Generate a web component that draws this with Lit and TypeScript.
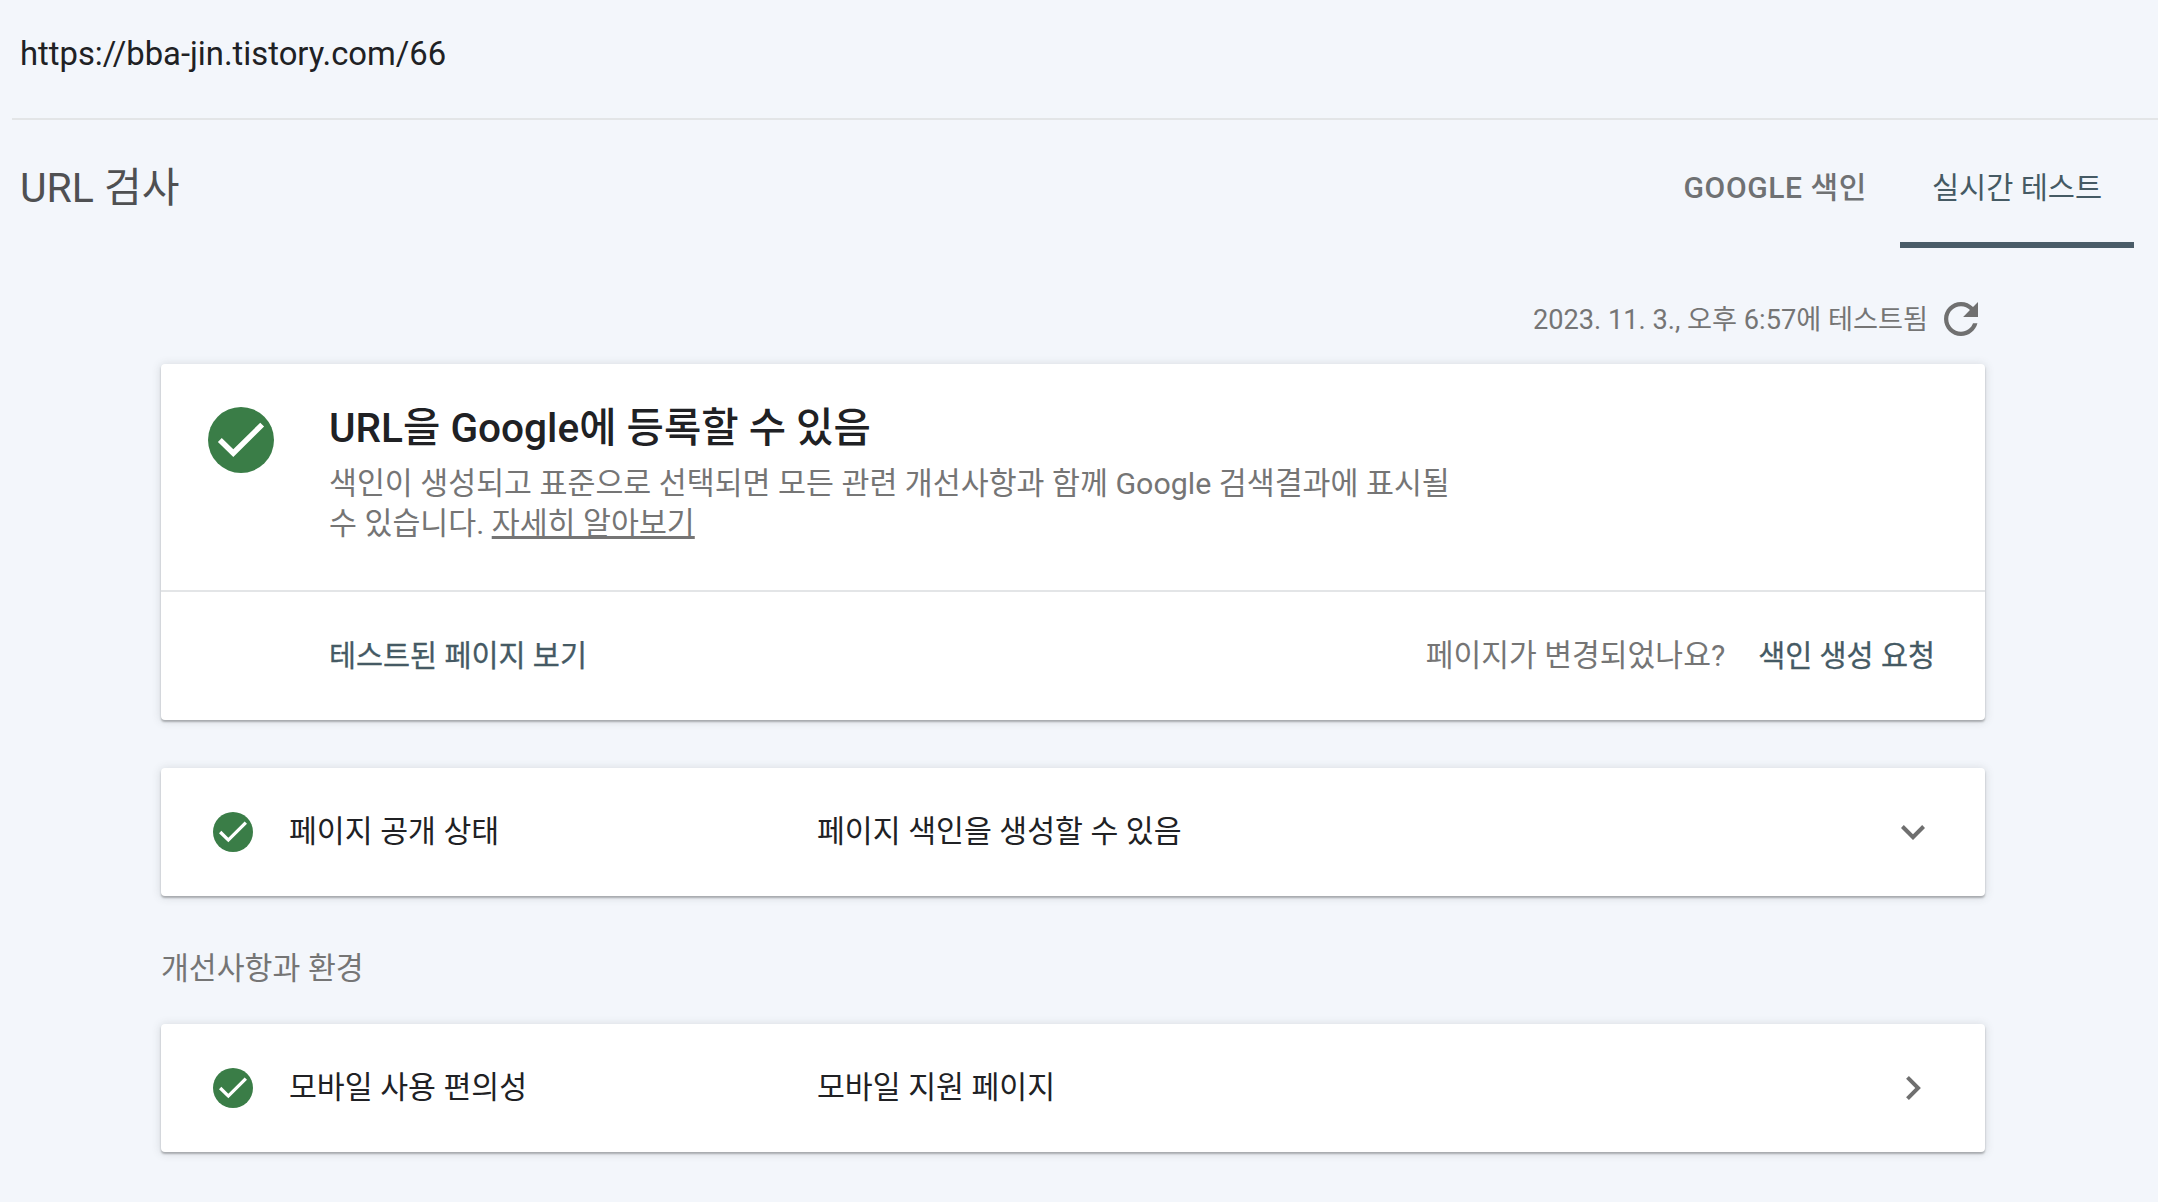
import { LitElement, html, css, svg } from 'lit';
import { customElement } from 'lit/decorators.js';

const checkIcon = svg`
  <circle cx="12" cy="12" r="12" fill="#3a7d47"></circle>
  <path fill="#fff" d="M9.2 15.4 5 11.3l-1.4 1.4 5.6 5.5L20.4 7.1 19 5.7z"></path>
`;

interface ResultRow {
  label: string;
  value: string;
  chevron: 'down' | 'right';
}

const coverage: ResultRow = { label: '페이지 공개 상태', value: '페이지 색인을 생성할 수 있음', chevron: 'down' };
const mobile: ResultRow = { label: '모바일 사용 편의성', value: '모바일 지원 페이지', chevron: 'right' };

@customElement('app-root')
export class AppRoot extends LitElement {
  renderRow(row: ResultRow) {
    return html`
      <section class="card row">
        <svg class="row-check" viewBox="0 0 24 24">${checkIcon}</svg>
        <span class="row-label">${row.label}</span>
        <span class="row-value">${row.value}</span>
        <span class="chevron">
          ${row.chevron === 'down'
            ? html`<svg class="chev-down" viewBox="6 8.59 12 7.41"><path d="M16.59 8.59 12 13.17 7.41 8.59 6 10l6 6 6-6z"></path></svg>`
            : html`<svg class="chev-right" viewBox="8.59 6 7.41 12"><path d="M10 6 8.59 7.41 13.17 12l-4.58 4.59L10 18l6-6z"></path></svg>`}
        </span>
      </section>
    `;
  }

  render() {
    return html`
      <div class="url-bar"><span class="url">https://bba-jin.tistory.com/66</span></div>
      <header class="title-row">
        <h1 class="title">URL 검사</h1>
        <nav class="tabs">
          <span class="tab">GOOGLE 색인</span>
          <span class="tab active">실시간 테스트</span>
        </nav>
      </header>
      <div class="tested">
        <span>2023. 11. 3., 오후 6:57에 테스트됨</span>
        <svg class="refresh" viewBox="4 4 16 16">
          <path d="M17.65 6.35C16.2 4.9 14.21 4 12 4c-4.42 0-7.99 3.58-7.99 8s3.57 8 7.99 8c3.73 0 6.84-2.55 7.73-6h-2.08c-.82 2.33-3.04 4-5.65 4-3.31 0-6-2.69-6-6s2.69-6 6-6c1.66 0 3.14.69 4.22 1.78L13 11h7V4l-2.35 2.35z"></path>
        </svg>
      </div>
      <main class="content">
        <section class="card verdict">
          <div class="verdict-top">
            <svg class="verdict-check" viewBox="0 0 24 24">${checkIcon}</svg>
            <div class="verdict-text">
              <h2 class="verdict-title">URL을 Google에 등록할 수 있음</h2>
              <p class="verdict-desc">
                색인이 생성되고 표준으로 선택되면 모든 관련 개선사항과 함께 Google 검색결과에 표시될
                수 있습니다. <a class="learn-more">자세히 알아보기</a>
              </p>
            </div>
          </div>
          <div class="verdict-actions">
            <span class="action">테스트된 페이지 보기</span>
            <span class="changed">페이지가 변경되었나요?</span>
            <span class="action">색인 생성 요청</span>
          </div>
        </section>
        ${this.renderRow(coverage)}
        <h3 class="section-title">개선사항과 환경</h3>
        ${this.renderRow(mobile)}
      </main>
    `;
  }

  static styles = css`
    :host {
      display: block;
      height: 1202px;
      overflow: hidden;
      background: #f3f6fb;
      font-family: Roboto, 'Noto Sans CJK KR', sans-serif;
      color: #202124;
    }

    .url-bar {
      height: 118px;
      margin-left: 12px;
      padding-left: 8px;
      display: flex;
      align-items: center;
      border-bottom: 2px solid #e3e5e7;
    }

    .url {
      font-size: 32.8px;
      padding-bottom: 10px;
    }

    .title-row {
      height: 128px;
      display: flex;
      justify-content: space-between;
      padding: 0 24px 0 20px;
    }

    .title {
      margin: 0;
      padding-top: 42px;
      font-size: 41px;
      line-height: 52px;
      font-weight: 400;
      color: #4f5052;
    }

    .tabs {
      display: flex;
    }

    .tab {
      box-sizing: border-box;
      height: 128px;
      padding-top: 48px;
      line-height: 40px;
      font-size: 30px;
      letter-spacing: 0.6px;
      font-weight: 500;
      color: #6f7173;
      margin-right: 33px;
    }

    .tab.active {
      width: 234px;
      margin: 0;
      text-align: center;
      font-size: 29.5px;
      letter-spacing: 0;
      font-weight: 400;
      color: #455a64;
      border-bottom: 6px solid #4a5c68;
    }

    .tested {
      height: 116px;
      display: flex;
      justify-content: flex-end;
      align-items: center;
      gap: 16px;
      padding: 22px 180px 0 0;
      box-sizing: border-box;
      font-size: 27.2px;
      color: #757575;
    }

    .refresh {
      width: 34px;
      height: 34px;
      margin-top: 3px;
      fill: #707070;
    }

    .content {
      margin: 0 173px 0 161px;
    }

    .card {
      background: #fff;
      border-radius: 4px;
      box-shadow:
        0 2px 2px rgba(60, 64, 67, 0.35),
        0 1px 8px 1px rgba(60, 64, 67, 0.15);
    }

    .verdict {
      height: 356px;
      margin-bottom: 48px;
    }

    .verdict-top {
      height: 228px;
      display: flex;
      gap: 55px;
      padding: 43px 0 0 47px;
      box-sizing: border-box;
      border-bottom: 2px solid #e3e5e7;
    }

    .verdict-check {
      width: 66px;
      height: 66px;
      flex: none;
    }

    .verdict-title {
      margin: -4px 0 0;
      font-size: 40.6px;
      line-height: 50px;
      font-weight: 500;
    }

    .verdict-desc {
      margin: 11px 0 0;
      width: 1135px;
      font-size: 30.37px;
      line-height: 40px;
      color: #757575;
      word-break: keep-all;
    }

    .learn-more {
      text-decoration: underline;
    }

    .verdict-actions {
      height: 126px;
      display: flex;
      align-items: center;
      padding: 0 50px 5px 168px;
      box-sizing: border-box;
    }

    .action {
      font-size: 29.4px;
      color: #455a64;
      -webkit-text-stroke: 0.3px #455a64;
    }

    .changed {
      margin-left: auto;
      margin-right: 33px;
      font-size: 30.2px;
      color: #757575;
    }

    .row {
      height: 128px;
      display: flex;
      align-items: center;
      padding: 0 48px 0 52px;
    }

    .row-check {
      width: 40px;
      height: 40px;
      flex: none;
    }

    .row-label {
      width: 528px;
      margin-left: 36px;
      font-size: 30.3px;
      padding-bottom: 6px;
    }

    .row-value {
      flex: 1;
      font-size: 30.3px;
      padding-bottom: 6px;
    }

    .chevron {
      width: 48px;
      display: flex;
      justify-content: center;
    }

    .chev-down {
      width: 24px;
      height: 15px;
      fill: #6f6f6f;
    }

    .chev-right {
      width: 15px;
      height: 24px;
      fill: #6f6f6f;
    }

    .section-title {
      margin: 0;
      height: 128px;
      line-height: 146px;
      font-size: 30.3px;
      font-weight: 400;
      color: #757575;
    }
  `;
}
